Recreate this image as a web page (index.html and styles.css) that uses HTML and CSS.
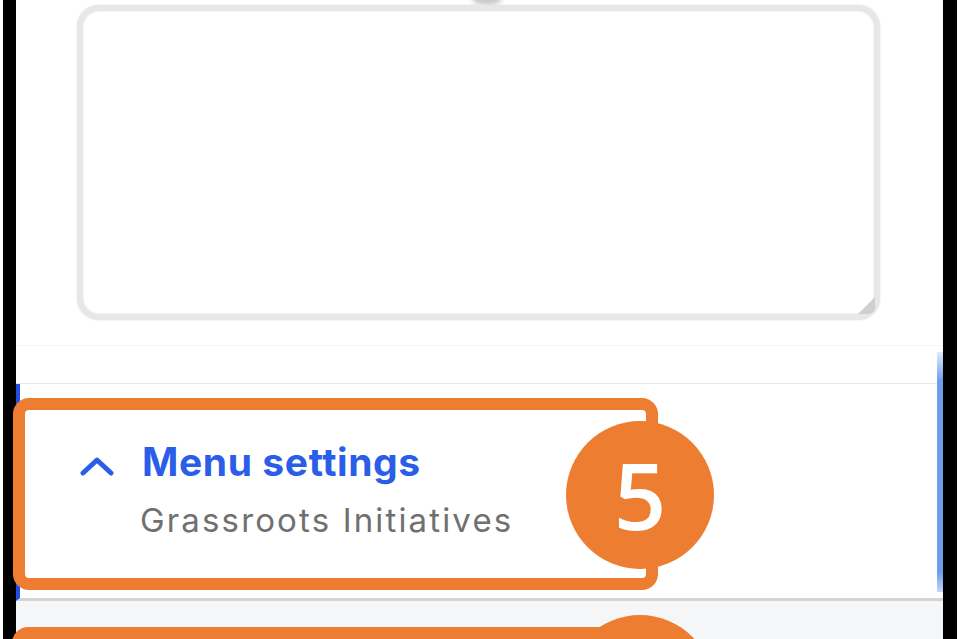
FILE: index.html
```html
<!DOCTYPE html>
<html lang="en">
<head>
<meta charset="utf-8">
<title>Menu settings</title>
<link rel="stylesheet" href="styles.css">
</head>
<body>
<div class="frame">
  <div class="editor">
    <span class="peek"></span>
    <div class="field">
      <textarea class="notes" aria-label="Description"></textarea>
      <svg class="grip" width="22" height="22" viewBox="0 0 22 22" aria-hidden="true">
        <path d="M21 4 L21 14 Q21 21 14 21 L4 21 Z" fill="#cfcfd1"/>
      </svg>
    </div>
    <div class="hint-rule"></div>
  </div>
  <section class="menu">
    <div class="menu-head">
      <svg class="chevron" width="34" height="22" viewBox="0 0 34 22" aria-hidden="true">
        <path d="M3 18 L17 5 L31 18" fill="none" stroke="#2a5ee8" stroke-width="5" stroke-linecap="round" stroke-linejoin="round"/>
      </svg>
      <div class="menu-text">
        <h2 class="menu-title">Menu settings</h2>
        <p class="menu-sub">Grassroots Initiatives</p>
      </div>
    </div>
    <span class="scroll-thumb"></span>
  </section>
  <div class="below"></div>
</div>

<div class="callout callout-one"></div>
<div class="badge badge-one">5</div>
<div class="callout callout-two"></div>
<div class="badge badge-two" aria-hidden="true"></div>
</body>
</html>
```

FILE: styles.css
```css
html, body {
  margin: 0;
  padding: 0;
}

body {
  width: 960px;
  height: 639px;
  overflow: hidden;
  background: #ffffff;
  font-family: Inter, "Noto Sans", "Liberation Sans", sans-serif;
  position: relative;
}

.frame {
  margin-left: 3px;
  width: 954px;
  height: 639px;
  box-sizing: border-box;
  border-left: 13px solid #000;
  border-right: 14px solid #000;
  display: flex;
  flex-direction: column;
  background: #fff;
}

.editor {
  position: relative;
  height: 384px;
  box-sizing: border-box;
  padding: 5px 0 0 61px;
  border-bottom: 1px solid #e8e8ea;
}

.peek {
  position: absolute;
  left: 456px;
  top: -9px;
  width: 30px;
  height: 14px;
  border-radius: 50%;
  background: #c9c9cb;
  filter: blur(2px);
}

.field {
  position: relative;
  width: 803px;
  height: 315px;
  filter: blur(0.7px);
}

.notes {
  display: block;
  width: 100%;
  height: 100%;
  box-sizing: border-box;
  margin: 0;
  border: 6px solid #e7e7e9;
  border-radius: 22px;
  background: #fff;
  resize: none;
  outline: none;
  box-shadow: 0 0 2px rgba(200, 200, 204, 0.6), inset 0 0 2px rgba(200, 200, 204, 0.6);
}

.grip {
  position: absolute;
  right: 4px;
  bottom: 5px;
}

.hint-rule {
  margin: 25px 0 0 -61px;
  height: 1px;
  background: #f3f4f5;
}

.menu {
  position: relative;
  height: 217px;
  box-sizing: border-box;
  border-left: 4px solid #1f4fdc;
  border-bottom: 3px solid #d3d4d6;
  padding: 54px 0 0 60px;
  background: #fff;
}

.menu-head {
  display: flex;
  align-items: flex-start;
  gap: 28px;
}

.chevron {
  margin-top: 17px;
  flex: none;
}

.menu-text {
  display: flex;
  flex-direction: column;
}

.menu-title {
  margin: 0;
  font-size: 39px;
  line-height: 47px;
  font-weight: 700;
  color: #2a5ee8;
  letter-spacing: 0.6px;
}

.menu-sub {
  margin: 15px 0 0 -2px;
  font-size: 33px;
  line-height: 40px;
  font-weight: 400;
  color: #707070;
  letter-spacing: 2.15px;
}

.scroll-thumb {
  position: absolute;
  right: 0;
  top: -32px;
  width: 6px;
  height: 240px;
  background: linear-gradient(to bottom, rgba(110, 158, 232, 0.2), #6e9ee8 12%, #6e9ee8 92%, rgba(110, 158, 232, 0.4));
}

.below {
  flex: 1;
  background: #f5f6f8;
}

.callout {
  position: absolute;
  box-sizing: border-box;
  border: 12px solid #ed7d31;
  border-radius: 16px;
}

.callout-one {
  left: 13px;
  top: 398px;
  width: 645px;
  height: 192px;
}

.callout-two {
  left: 12px;
  top: 627px;
  width: 645px;
  height: 150px;
}

.badge {
  position: absolute;
  width: 148px;
  height: 148px;
  border-radius: 50%;
  background: #ed7d31;
  color: #fff;
  font-family: "Open Sans", "Noto Sans", sans-serif;
  font-weight: 600;
  font-size: 92px;
  line-height: 148px;
  text-align: center;
}

.badge-one {
  left: 566px;
  top: 421px;
}

.badge-two {
  left: 566px;
  top: 615px;
}
```
